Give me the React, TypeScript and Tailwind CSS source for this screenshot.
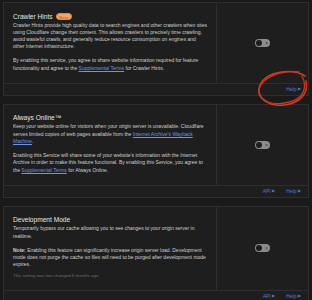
import React from 'react';

const font = { fontFamily: '"Liberation Sans", Arial, sans-serif' };

const Toggle: React.FC = () => (
  <div className="relative w-[15px] h-[8px] rounded-full bg-[#8c8c8c]">
    <div className="absolute left-[1px] top-[1px] w-[6px] h-[6px] rounded-full bg-[#1c1c1c]" />
    <span className="absolute right-[2px] top-[0px] text-[5px] leading-[8px] text-[#3a3a3a]">×</span>
  </div>
);

const Link: React.FC<{ children: React.ReactNode }> = ({ children }) => (
  <a className="text-[#6f93e6] underline underline-offset-[1px] decoration-[0.5px]">{children}</a>
);

const FooterLink: React.FC<{ label: string }> = ({ label }) => (
  <span className="flex items-center gap-[1.5px] text-[#5479d2] text-[5px] leading-[6px]">
    {label}
    <span className="text-[3.6px]">▶</span>
  </span>
);

interface CardProps {
  title: React.ReactNode;
  children: React.ReactNode;
  api?: boolean;
}

const Card: React.FC<CardProps> = ({ title, children, api }) => (
  <div className="border border-[#2f2f2f] bg-[#1e1e1e]">
    <div className="flex">
      <div className="flex-1 pl-[9px] pr-[8px] pt-[8.5px] pb-[11px]">
        <div className="flex items-center gap-[3px] h-[9px] text-[6.6px] leading-[9px] text-[#e6e6e6]">{title}</div>
        <div className="mt-[1px] text-[5px] leading-[7.3px] text-[#cfcfcf] flex flex-col gap-[6.7px]">{children}</div>
      </div>
      <div className="w-[92px] border-l border-[#2f2f2f] flex items-center justify-center">
        <Toggle />
      </div>
    </div>
    <div className="h-[12px] border-t border-[#2f2f2f] flex items-center justify-end gap-[11px] pr-[7px]">
      {api && <FooterLink label="API" />}
      <FooterLink label="Help" />
    </div>
  </div>
);

export default function App() {
  return (
    <div style={font} className="relative w-[312px] h-[300px] overflow-hidden bg-[#1a1a1a] px-[3px] pt-[2px] flex flex-col gap-[8px]">
      <Card
        title={
          <>
            <span>Crawler Hints</span>
            <span className="px-[2.5px] h-[7px] leading-[7px] rounded-full border-[0.5px] border-[#f08a3c] bg-[#f3a467] text-[4.4px] text-[#c5581c]">Beta</span>
          </>
        }
      >
        <p>
          Crawler Hints provide high quality data to search engines and other crawlers when sites using Cloudflare change their content. This allows crawlers to precisely time crawling, avoid wasteful crawls, and generally reduce resource consumption on engines and other Internet infrastructure.
        </p>
        <p>
          By enabling this service, you agree to share website information required for feature functionality and agree to the <Link>Supplemental Terms</Link> for Crawler Hints.
        </p>
      </Card>

      <Card title={<span>Always Online™</span>} api>
        <p>
          Keep your website online for visitors when your origin server is unavailable. Cloudflare serves limited copies of web pages available from the <Link>Internet Archive's Wayback Machine</Link>.
        </p>
        <p>
          Enabling this Service will share some of your website's information with the Internet Archive in order to make this feature functional. By enabling this Service, you agree to the <Link>Supplemental Terms</Link> for Always Online.
        </p>
      </Card>

      <Card title={<span>Development Mode</span>} api>
        <p>Temporarily bypass our cache allowing you to see changes to your origin server in realtime.</p>
        <p>
          <b className="font-bold">Note:</b> Enabling this feature can significantly increase origin server load. Development mode does not purge the cache so files will need to be purged after development mode expires.
        </p>
        <p className="-mt-[3.7px] text-[4.4px] leading-[7px] text-[#6e6e6e]">This setting was last changed 8 months ago</p>
      </Card>

      <svg className="absolute left-[252px] top-[67px] w-[60px] h-[42px]" viewBox="0 0 60 42" fill="none">
        <path d="M53,9 C40,1 14,4 8,18 C3,31 17,40 33,38 C47,36 57,27 54,14" stroke="#d13b22" strokeWidth="1.6" strokeLinecap="round" />
        <path d="M47,5 C30,3 9,10 7,23 C6,35 22,39 37,35 C51,32 56,21 50,9" stroke="#c9361f" strokeWidth="1.3" strokeLinecap="round" />
      </svg>
    </div>
  );
}
